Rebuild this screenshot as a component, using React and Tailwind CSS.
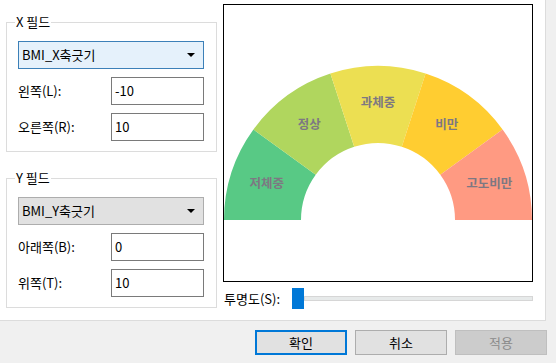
import React from 'react';

const FONT = { fontFamily: '"Noto Sans CJK KR", "Noto Sans", sans-serif' };

// 게이지 구간 (왼쪽부터)
const SEGMENTS = [
  { label: '저체중', color: '#58c985' },
  { label: '정상', color: '#b0d65e' },
  { label: '과체중', color: '#ecdf52' },
  { label: '비만', color: '#ffcd31' },
  { label: '고도비만', color: '#ff9a82' },
];

const CX = 154;
const CY = 215;
const R_OUT = 154;
const R_IN = 77;
const R_LABEL = 117;

const pt = (r, deg) => {
  const a = (deg * Math.PI) / 180;
  return [CX + r * Math.cos(a), CY - r * Math.sin(a)];
};

const arcPath = (a0, a1) => {
  const [x0, y0] = pt(R_OUT, a0);
  const [x1, y1] = pt(R_OUT, a1);
  const [x2, y2] = pt(R_IN, a1);
  const [x3, y3] = pt(R_IN, a0);
  return `M${x0} ${y0} A${R_OUT} ${R_OUT} 0 0 1 ${x1} ${y1} L${x2} ${y2} A${R_IN} ${R_IN} 0 0 0 ${x3} ${y3} Z`;
};

const Gauge = () => (
  <svg width="308" height="276" viewBox="0 0 308 276" className="block">
    {SEGMENTS.map((s, i) => {
      const a0 = 180 - 36 * i;
      const a1 = 180 - 36 * (i + 1);
      const [lx, ly] = pt(R_LABEL, (a0 + a1) / 2);
      return (
        <g key={s.label}>
          <path d={arcPath(a0, a1)} fill={s.color} />
          <text
            x={lx}
            y={ly + 4}
            textAnchor="middle"
            fontSize="12.5"
            fontWeight="700"
            fill="#7d7882"
            style={FONT}
          >
            {s.label}
          </text>
        </g>
      );
    })}
  </svg>
);

// 필드 그룹 박스
const FieldGroup = ({ title, combo, active, rows, className }) => (
  <fieldset className={`w-[211px] border border-[#dcdcdc] pl-[11px] pr-[11px] pb-[10px] pt-[11px] ${className}`}>
    <legend className="-ml-[3px] px-[1px] text-[13px] leading-[16px] text-black">{title}</legend>
    <div
      className={`flex h-[28px] w-[186px] items-center justify-between border pl-[3px] pr-[8px] text-[13px] text-black ${
        active ? 'border-[#3c80b8] bg-[#e5f1fb]' : 'border-[#adadad] bg-[#e1e1e1]'
      }`}
    >
      <span>{combo}</span>
      <span className="h-0 w-0 border-x-[4px] border-t-[4px] border-x-transparent border-t-black" />
    </div>
    {rows.map((r) => (
      <div key={r.label} className="mt-[8px] flex h-[28px] items-center justify-between">
        <span className="text-[13px] text-black">{r.label}</span>
        <div className="mr-px flex h-[28px] w-[93px] items-center border border-[#7a7a7a] bg-white pl-[3px] text-[13px] text-black">
          {r.value}
        </div>
      </div>
    ))}
  </fieldset>
);

const Button = ({ children, variant }) => {
  const styles = {
    primary: 'border-2 border-[#0078d7] bg-[#e1e1e1] text-black',
    normal: 'border border-[#adadad] bg-[#e1e1e1] text-black',
    disabled: 'border border-[#bfbfbf] bg-[#cccccc] text-[#8a8a8a]',
  };
  return (
    <div className={`flex h-[25px] w-[92px] items-center justify-center text-[13px] ${styles[variant]}`}>
      {children}
    </div>
  );
};

export default function App() {
  return (
    <div className="flex h-[363px] w-[556px] flex-col bg-[#f0f0f0]" style={FONT}>
      <div className="flex h-[321px] w-[546px] border-b border-r border-[#dcdcdc] bg-white">
        {/* 왼쪽: 필드 설정 */}
        <div className="flex flex-col pl-[6px] pt-[14px]">
          <FieldGroup
            title="X 필드"
            combo="BMI_X축긋기"
            active
            rows={[
              { label: '왼쪽(L):', value: '-10' },
              { label: '오른쪽(R):', value: '10' },
            ]}
          />
          <FieldGroup
            title="Y 필드"
            combo="BMI_Y축긋기"
            className="mt-[18px]"
            rows={[
              { label: '아래쪽(B):', value: '0' },
              { label: '위쪽(T):', value: '10' },
            ]}
          />
        </div>

        {/* 오른쪽: 미리보기 + 투명도 */}
        <div className="ml-[6px] flex flex-col pt-[4px]">
          <div className="h-[278px] w-[310px] border border-black bg-white">
            <Gauge />
          </div>
          <div className="mt-[6px] flex h-[21px] items-center">
            <span className="w-[69px] pl-[1px] text-[13px] text-black">투명도(S):</span>
            <div className="h-[21px] w-[12px] bg-[#0078d7]" />
            <div className="h-[5px] w-[229px] border border-[#d6d6d6] bg-[#e7eaea]" />
          </div>
        </div>
      </div>

      {/* 하단 버튼 */}
      <div className="flex justify-end gap-[8px] pr-[9px] pt-[9px]">
        <Button variant="primary">확인</Button>
        <Button variant="normal">취소</Button>
        <Button variant="disabled">적용</Button>
      </div>
    </div>
  );
}
